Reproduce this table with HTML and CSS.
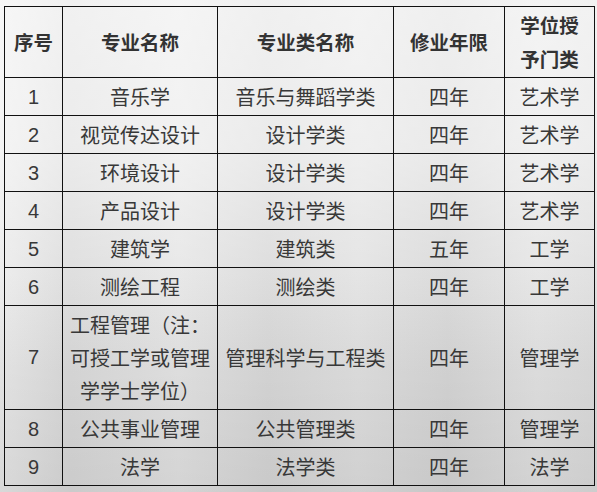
FILE: index.html
```html
<!DOCTYPE html>
<html lang="zh">
<head>
<meta charset="utf-8">
<link rel="stylesheet" href="styles.css">
</head>
<body>
<div class="page">
<table class="majors">
  <colgroup>
    <col class="c1"><col class="c2"><col class="c3"><col class="c4"><col class="c5">
  </colgroup>
  <thead>
    <tr class="head">
      <th>序号</th><th>专业名称</th><th>专业类名称</th><th>修业年限</th><th>学位授<br>予门类</th>
    </tr>
  </thead>
  <tbody>
    <tr><td>1</td><td>音乐学</td><td>音乐与舞蹈学类</td><td>四年</td><td>艺术学</td></tr>
    <tr><td>2</td><td>视觉传达设计</td><td>设计学类</td><td>四年</td><td>艺术学</td></tr>
    <tr><td>3</td><td>环境设计</td><td>设计学类</td><td>四年</td><td>艺术学</td></tr>
    <tr><td>4</td><td>产品设计</td><td>设计学类</td><td>四年</td><td>艺术学</td></tr>
    <tr><td>5</td><td>建筑学</td><td>建筑类</td><td>五年</td><td>工学</td></tr>
    <tr><td>6</td><td>测绘工程</td><td>测绘类</td><td>四年</td><td>工学</td></tr>
    <tr class="tall"><td>7</td><td>工程管理（注：<br>可授工学或管理<br>学学士学位）</td><td>管理科学与工程类</td><td>四年</td><td>管理学</td></tr>
    <tr><td>8</td><td>公共事业管理</td><td>公共管理类</td><td>四年</td><td>管理学</td></tr>
    <tr><td>9</td><td>法学</td><td>法学类</td><td>四年</td><td>法学</td></tr>
  </tbody>
</table>
</div>
</body>
</html>
```
FILE: styles.css
```css
html, body {
  margin: 0;
  padding: 0;
}
body {
  width: 597px;
  height: 492px;
  overflow: hidden;
  background-color: #e4e4e4;
  background-image:
    linear-gradient(180deg, rgba(255,255,255,0.6) 0%, rgba(255,255,255,0.45) 30%, rgba(255,255,255,0.1) 55%, rgba(0,0,0,0.04) 75%, rgba(0,0,0,0.08) 100%),
    linear-gradient(90deg, #ebebeb 0%, #dcdcdc 12%, #e6e6e6 30%, #dadada 45%, #e2e2e2 60%, #d8d8d8 75%, #e4e4e4 90%, #dedede 100%);
  font-family: "Noto Sans CJK SC", "Microsoft YaHei", sans-serif;
}
.page {
  padding: 6px 0 0 4px;
}
.majors {
  border-collapse: collapse;
  table-layout: fixed;
  width: 591px;
  color: #383838;
  font-size: 20px;
}
.c1 { width: 58px; }
.c2 { width: 155px; }
.c3 { width: 176px; }
.c4 { width: 111px; }
.c5 { width: 90px; }
.majors th,
.majors td {
  border: 1px solid #111;
  text-align: center;
  vertical-align: middle;
  padding: 0 3px;
  line-height: 34px;
  height: 38px;
  box-sizing: border-box;
  white-space: nowrap;
}
.majors th {
  font-weight: bold;
  color: #333;
  font-size: 19.5px;
  line-height: 34px;
}
.head th {
  height: 71px;
}
.majors td:first-child {
  font-family: "Liberation Sans", Arial, sans-serif;
  font-size: 20px;
}
.tall td {
  height: 104px;
  line-height: 33px;
}
```
